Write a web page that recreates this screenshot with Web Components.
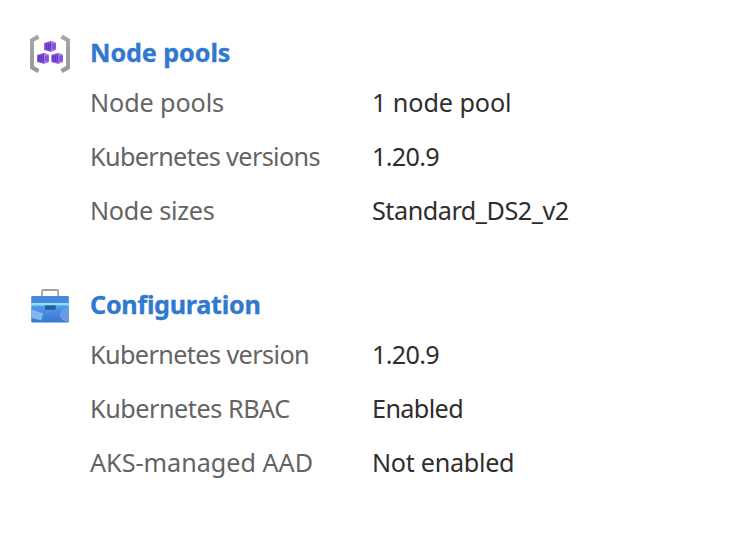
<!DOCTYPE html>
<html lang="en"><head><meta charset="utf-8"><title>Cluster properties</title>
<style>body{margin:0;background:#fff}</style></head>
<body>
<property-page>
  <property-group heading="Node pools" width="140.4">
    <pool-icon slot="icon"></pool-icon>
    <property-row label="Node pools" lw="134" value="1 node pool" vw="139.5"></property-row>
    <property-row label="Kubernetes versions" lw="230" value="1.20.9" vw="67"></property-row>
    <property-row label="Node sizes" lw="124.5" value="Standard_DS2_v2" vw="196.7"></property-row>
  </property-group>
  <property-group heading="Configuration" width="170.5">
    <toolbox-icon slot="icon"></toolbox-icon>
    <property-row label="Kubernetes version" lw="219" value="1.20.9" vw="67"></property-row>
    <property-row label="Kubernetes RBAC" lw="199.7" value="Enabled" vw="91"></property-row>
    <property-row label="AKS-managed AAD" lw="223" value="Not enabled" vw="142.3"></property-row>
  </property-group>
</property-page>
<script>
const define = (name, html, init) => customElements.define(name, class extends HTMLElement {
  connectedCallback() {
    if (this.shadowRoot) return;
    this.attachShadow({mode: 'open'}).innerHTML = html;
    if (init) init(this, this.shadowRoot);
  }
});

// Text that spreads its letter spacing to fill a given advance width.
define('fit-text', `<style>:host{display:inline-block;white-space:pre}</style><span></span>`, (el, root) => {
  const span = root.querySelector('span');
  span.textContent = el.getAttribute('text');
  const natural = span.getBoundingClientRect().width;
  span.style.letterSpacing = (el.getAttribute('width') - natural) / span.textContent.length + 'px';
});

define('property-page', `<style>
  :host{display:flex;flex-direction:column;gap:44px;box-sizing:border-box;height:550px;padding:29px 30px 0;
    font:25.2px/54px "Noto Sans","Open Sans",sans-serif;overflow:hidden}
</style><slot></slot>`);

define('property-group', `<style>
  :host{display:grid;grid-template-columns:40px 1fr;column-gap:20px}
  .icon{padding-top:5px}
  h2{margin:0;font-size:25.2px;line-height:46px;font-weight:700;color:#3078d0;-webkit-text-stroke:.3px #3078d0}
</style><div class="icon"><slot name="icon"></slot></div><section><h2></h2><slot></slot></section>`, (el, root) => {
  const t = document.createElement('fit-text');
  t.setAttribute('text', el.getAttribute('heading'));
  t.setAttribute('width', el.getAttribute('width'));
  root.querySelector('h2').append(t);
});

define('property-row', `<style>
  :host{display:grid;grid-template-columns:282px 1fr;height:54px}
  .label{color:#646464}.value{color:#2f2e2d}
</style><div class="label"></div><div class="value"></div>`, (el, root) => {
  for (const [k, w] of [['label', 'lw'], ['value', 'vw']]) {
    const t = document.createElement('fit-text');
    t.setAttribute('text', el.getAttribute(k));
    t.setAttribute('width', el.getAttribute(w));
    root.querySelector('.' + k).append(t);
  }
});

define('pool-icon', `<style>:host,svg{display:block}</style>
<svg width="40" height="40" viewBox="0 0 40 40">
  <defs>
    <linearGradient id="b" x2="0" y2="1"><stop offset="0" stop-color="#a6a6a6"/><stop offset="1" stop-color="#999"/></linearGradient>
    <g id="c">
      <path fill="#7e4bd8" d="M0 2 6.8 0 11.6 1.8V8.9L6.8 10.8 0 9.1z"/>
      <path fill="#a67af4" d="M6.8 0 11.6 1.8V8.9L6.8 10.8z"/>
      <path fill="#8255d6" d="M8 2.6 11.6 2.9V7.9L8 8.6z"/>
      <path stroke="#5a2bb0" stroke-width=".9" d="M2 3V8.2M4.2 2.8V8.5M6.4 2.6V8.7"/>
    </g>
  </defs>
  <path fill="url(#b)" d="M0 5 7.5.8 9.5 4.4 4 7.6V31.9L9.5 35.2 7.5 39 0 34.7z"/>
  <path fill="url(#b)" d="M40 5 32.5.8 30.5 4.4 36 7.6V31.9L30.5 35.2 32.5 39 40 34.7z"/>
  <use href="#c" x="14.2" y="6.9"/><use href="#c" x="7.1" y="19"/><use href="#c" x="21.3" y="19"/>
</svg>`);

define('toolbox-icon', `<style>:host,svg{display:block}</style>
<svg width="40" height="40" viewBox="0 0 40 40">
  <defs>
    <linearGradient id="g" x2="0" y2="1"><stop offset="0" stop-color="#5b9eec"/><stop offset=".35" stop-color="#4a8de0"/><stop offset="1" stop-color="#3576cf"/></linearGradient>
    <clipPath id="k"><rect x="1.2" y="10" width="37.7" height="26.5" rx="1"/></clipPath>
  </defs>
  <path fill="none" stroke="#a3a3a3" stroke-width="1.8" d="M12 10.5V5.2Q12 4 13.2 4H27Q28.2 4 28.2 5.2V10.5"/>
  <g clip-path="url(#k)">
    <rect x="1" y="10" width="38" height="7" fill="#478adb"/>
    <rect x="1" y="19" width="38" height="18" fill="url(#g)"/>
    <path fill="#83b5f0" d="M1 23.3 13.2 27.3 11.3 34.6 1 31.7z"/>
    <circle cx="36.5" cy="29" r="6.5" fill="#699be6"/>
    <rect x="1" y="17" width="38" height="2.4" fill="#84e4fa"/>
  </g>
  <rect x="15" y="19.4" width="10.7" height="4.3" fill="#1f5d9e"/>
</svg>`);
</script>
</body></html>
